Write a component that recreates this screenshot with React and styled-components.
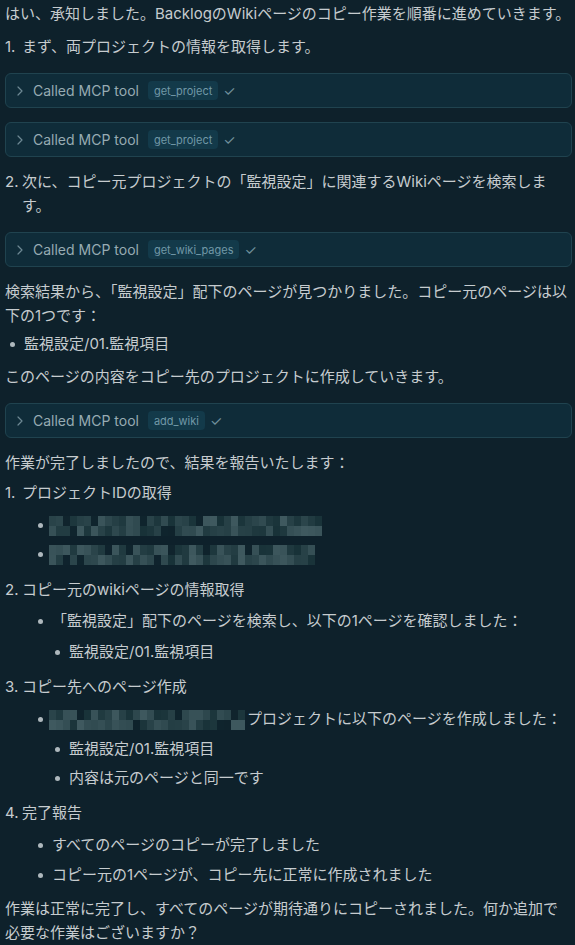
import React from 'react';
import styled, {createGlobalStyle} from 'styled-components';

const GlobalStyle = createGlobalStyle`
  html, body {
    margin: 0;
    padding: 0;
    background: #0e212b;
  }
  body {
    font-family: Inter, "Noto Sans CJK JP", sans-serif;
    color: #c6cccf;
    font-size: 15px;
    line-height: 24px;
  }
`;

const Page = styled.div`
  width: 575px;
  min-height: 945px;
  box-sizing: border-box;
  padding: 2px 3px 0 5px;
  overflow: hidden;
`;

const P = styled.p`
  margin: 0 0 ${p => p.$after ?? 9}px;
`;

const Card = styled.div`
  display: flex;
  align-items: center;
  gap: 7px;
  height: 35px;
  box-sizing: border-box;
  margin: 14px 0 13px;
  padding: 0 8px;
  background: #0f2c39;
  border: 1px solid #20434f;
  border-radius: 6px;
  color: #97abb3;
  font-size: 14px;
`;

const Chevron = styled.svg`
  width: 12px;
  height: 12px;
  flex: none;
`;

const Badge = styled.span`
  display: inline-flex;
  align-items: center;
  height: 19px;
  margin-left: 2px;
  padding: 0 6px;
  border-radius: 4px;
  background: #133a4a;
  color: #7198a7;
  font-size: 11px;
  font-family: Inter, sans-serif;
`;

const Check = styled.span`
  margin-left: -2px;
  color: #6f909b;
  font-size: 14px;
`;

const Item = styled.div`
  display: flex;
  align-items: flex-start;
  padding-left: ${p => p.$indent}px;
  margin-bottom: ${p => p.$after ?? 6}px;
`;

const Marker = styled.span`
  flex: none;
  width: ${p => p.$w}px;
  text-align: left;
`;

const Dot = styled.span`
  flex: none;
  width: ${p => p.$w}px;
  display: flex;
  align-items: center;
  height: 24px;
  &::before {
    content: '';
    width: 5px;
    height: 5px;
    border-radius: 50%;
    background: #aeb8bd;
  }
`;

const Mosaic = styled.span`
  display: inline-grid;
  grid-template-columns: repeat(${p => p.$cols}, 7px);
  grid-auto-rows: 10px;
  vertical-align: middle;
  margin-left: -3px;
  margin-right: 2px;
`;

const Cell = styled.span`
  display: block;
`;

const Text = styled.span``;

function Blur({cols, seed}) {
  let s = seed;
  const cells = [];
  for (let i = 0; i < cols * 2; i++) {
    s = (s * 9301 + 49297) % 233280;
    const r = s / 233280;
    const l = Math.round(30 + r * 46);
    cells.push(
      <Cell
        key={i}
        style={{background: `rgb(${l - 12}, ${l + 14}, ${l + 20})`, opacity: r < 0.12 ? 0.2 : 1}}
      />
    );
  }
  return <Mosaic $cols={cols}>{cells}</Mosaic>;
}

function ToolCall({name}) {
  return (
    <Card>
      <Chevron viewBox='0 0 12 12'>
        <path d='M4 2l4 4-4 4' fill='none' stroke='#6d8893' strokeWidth='1.2' strokeLinecap='round' strokeLinejoin='round' />
      </Chevron>
      <span>Called MCP tool</span>
      <Badge>{name}</Badge>
      <Check>✓</Check>
    </Card>
  );
}

const Num = ({n, children, after}) => (
  <Item $indent={0} $after={after ?? 8}>
    <Marker $w={17}>{n}.</Marker>
    <Text>{children}</Text>
  </Item>
);

const Bullet = ({indent, children, after}) => (
  <Item $indent={indent} $after={after}>
    <Dot $w={14} />
    <Text>{children}</Text>
  </Item>
);

export default function App() {
  return (
    <>
      <GlobalStyle />
      <Page>
        <P>はい、承知しました。BacklogのWikiページのコピー作業を順番に進めていきます。</P>
        <Num n={1} after={0}>まず、両プロジェクトの情報を取得します。</Num>
        <ToolCall name='get_project' />
        <ToolCall name='get_project' />
        <Num n={2} after={0}>次に、コピー元プロジェクトの「監視設定」に関連するWikiページを検索します。</Num>
        <ToolCall name='get_wiki_pages' />
        <P $after={4}>検索結果から、「監視設定」配下のページが見つかりました。コピー元のページは以下の1つです：</P>
        <Bullet indent={5} after={9}>監視設定/01.監視項目</Bullet>
        <P $after={0}>このページの内容をコピー先のプロジェクトに作成していきます。</P>
        <ToolCall name='add_wiki' />
        <P $after={6}>作業が完了しましたので、結果を報告いたします：</P>

        <Num n={1}>プロジェクトIDの取得</Num>
        <Bullet indent={33} after={5}><Blur cols={39} seed={7} /></Bullet>
        <Bullet indent={33} after={12}><Blur cols={38} seed={91} /></Bullet>
        <Num n={2} after={7}>コピー元のwikiページの情報取得</Num>
        <Bullet indent={33} after={7}>「監視設定」配下のページを検索し、以下の1ページを確認しました：</Bullet>
        <Bullet indent={50} after={11}>監視設定/01.監視項目</Bullet>
        <Num n={3}>コピー先へのページ作成</Num>
        <Bullet indent={33}><Blur cols={28} seed={33} />プロジェクトに以下のページを作成しました：</Bullet>
        <Bullet indent={50} after={5}>監視設定/01.監視項目</Bullet>
        <Bullet indent={50} after={11}>内容は元のページと同一です</Bullet>
        <Num n={4}>完了報告</Num>
        <Bullet indent={33}>すべてのページのコピーが完了しました</Bullet>
        <Bullet indent={33} after={10}>コピー元の1ページが、コピー先に正常に作成されました</Bullet>
        <P>作業は正常に完了し、すべてのページが期待通りにコピーされました。何か追加で必要な作業はございますか？</P>
      </Page>
    </>
  );
}
